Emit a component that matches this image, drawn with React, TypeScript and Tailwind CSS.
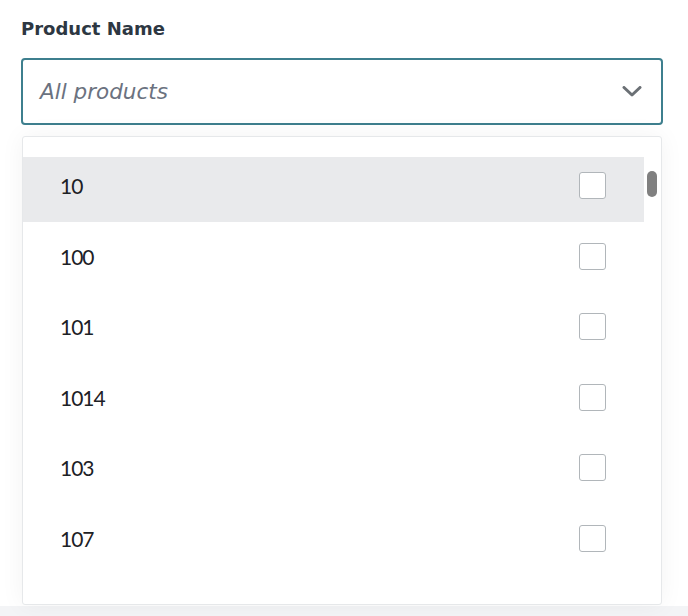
import { useState } from 'react'

const PRODUCTS = ['10', '100', '101', '1014', '103', '107']

function Chevron() {
  return (
    <svg width="20" height="11" viewBox="0 0 20 11" fill="none" className="shrink-0">
      <path
        d="M2 1.5l8 7.5 8-7.5"
        stroke="#6b7075"
        strokeWidth="3"
        strokeLinecap="round"
        strokeLinejoin="round"
      />
    </svg>
  )
}

export default function App() {
  const [hovered, setHovered] = useState(0)
  const [checked, setChecked] = useState<string[]>([])

  const toggle = (p: string) =>
    setChecked((c) => (c.includes(p) ? c.filter((x) => x !== p) : [...c, p]))

  return (
    <div className="min-h-[616px] bg-[#f3f4f6] font-['Lato','Noto_Sans',sans-serif]">
      <div className="h-[606px] bg-white pl-[21px] pr-[25px] pt-[17px]">
        <label className="block font-['DejaVu_Sans',sans-serif] text-[18px] leading-[24px] font-bold text-[#2d3742]">
          Product Name
        </label>

        <button
          type="button"
          className="mt-[17px] flex h-[67px] w-full items-center justify-between rounded-[4px] border-2 border-[#3e7f8e] pl-[17px] pr-[19px] text-left"
        >
          <span className="pt-[2px] font-['DejaVu_Sans',sans-serif] text-[21.5px] italic text-[#6b7280]">
            All products
          </span>
          <Chevron />
        </button>

        <div className="mx-px mt-[11px] flex h-[469px] overflow-hidden rounded-[3px] border border-[#e6e8ea] bg-white shadow-[0_0_24px_rgba(0,0,0,0.05)]">
          <ul className="flex flex-1 flex-col gap-[5.5px] pt-[20px]">
            {PRODUCTS.map((p, i) => (
              <li
                key={p}
                onMouseEnter={() => setHovered(i)}
                onClick={() => toggle(p)}
                className={
                  'flex h-[65px] shrink-0 cursor-pointer items-center justify-between pb-2 pl-[37px] pr-[38px] ' +
                  (hovered === i ? 'bg-[#e9eaec]' : 'bg-white')
                }
              >
                <span className="text-[21px] leading-none tracking-[-1px] text-[#1d2125]">{p}</span>
                <span
                  className={
                    'h-[27px] w-[27px] rounded-[3px] border ' +
                    (checked.includes(p)
                      ? 'border-[#3e7f8e] bg-[#3e7f8e]'
                      : 'border-[#b1b6ba] bg-white')
                  }
                />
              </li>
            ))}
          </ul>
          <div className="w-[17px] pt-[34px]">
            <div className="ml-[3px] h-[26px] w-[10px] rounded-full bg-[#808080]" />
          </div>
        </div>
      </div>
    </div>
  )
}
